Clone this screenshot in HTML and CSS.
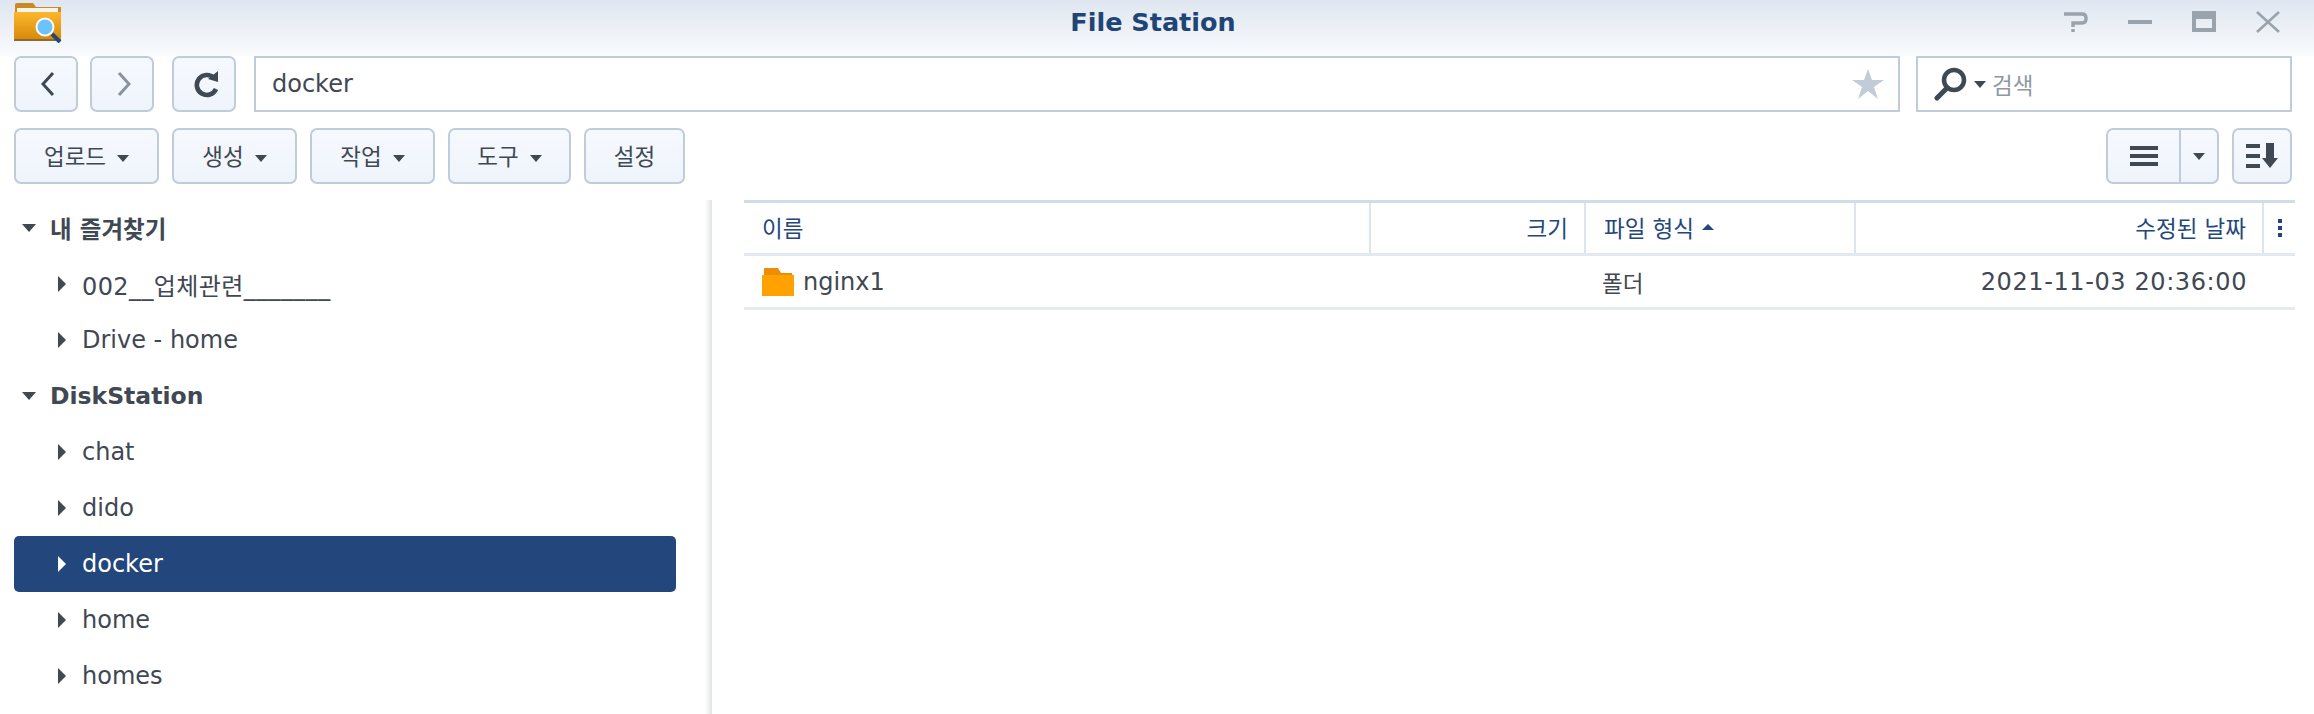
FILE: index.html
```html
<!DOCTYPE html>
<html lang="ko">
<head>
    <meta charset="UTF-8">
    <title>File Station</title>
    <link rel="stylesheet" href="styles.css">
</head>
<body>

    <div class="window">
        <div class="titlebar">
            <svg class="app-icon" width="48" height="40" viewBox="0 0 48 40">
                <defs>
                    <linearGradient id="folderFill" x1="0" y1="0" x2="0" y2="1">
                        <stop offset="0" stop-color="#fdb72c"/>
                        <stop offset="1" stop-color="#d88a0c"/>
                    </linearGradient>
                </defs>
                <path d="M1 2 Q1 0 3 0 H19 L22 4 H47 V10 H1 Z" fill="#c98a1e"/>
                <rect x="3" y="5" width="41" height="4" fill="#f4f4f0"/>
                <rect x="0" y="9" width="47" height="27" fill="url(#folderFill)"/>
                <rect x="0" y="36" width="47" height="2" fill="#8a6a30"/>
                <path d="M38 31 L46 39" stroke="#1d4a78" stroke-width="4"/>
                <circle cx="31" cy="24" r="8.5" fill="#6cc2fb" stroke="#fdfbf2" stroke-width="2"/>
            </svg>
            <div class="title">File Station</div>
            <div class="win-btns">
                <svg width="24" height="22" viewBox="0 0 24 22"><path d="M0 3 H18 Q22 3 22 7 V8 Q22 12 18 12 H9 V16 M9 18 V21" fill="none" stroke="#9aa2ab" stroke-width="3.4"/></svg>
                <svg width="24" height="22" viewBox="0 0 24 22"><rect x="0" y="9" width="24" height="4" fill="#9aa2ab"/></svg>
                <svg width="24" height="22" viewBox="0 0 24 22"><path d="M0 0 H24 V21 H0 Z M4 8 V17 H20 V8 Z" fill="#9aa2ab" fill-rule="evenodd"/></svg>
                <svg width="24" height="22" viewBox="0 0 24 22"><path d="M1 1 L23 21 M23 1 L1 21" stroke="#9aa2ab" stroke-width="2.6"/></svg>
            </div>
        </div>

        <div class="toolbar nav-row">
            <button class="btn icon-btn chevron"><svg width="14" height="26" viewBox="0 0 14 26"><path d="M12 2 L2 13 L12 24" fill="none" stroke="#3f4853" stroke-width="3"/></svg></button>
            <button class="btn icon-btn chevron"><svg width="14" height="26" viewBox="0 0 14 26"><path d="M2 2 L12 13 L2 24" fill="none" stroke="#8a929b" stroke-width="3"/></svg></button>
            <button class="btn icon-btn refresh"><svg width="26" height="28" viewBox="0 0 26 28"><path d="M20 8 A10 10 0 1 0 22 19" fill="none" stroke="#3f4853" stroke-width="4.6"/><path d="M14 9 L24 1 V12 Z" fill="#3f4853"/></svg></button>
            <div class="path-box">
                <span>docker</span>
                <svg width="32" height="30" viewBox="0 0 32 30"><path d="M16 0 L20 11 H32 L22 18 L26 30 L16 22 L6 30 L10 18 L0 11 H12 Z" fill="#c2ccd8"/></svg>
            </div>
            <div class="search-box">
                <svg width="34" height="34" viewBox="0 0 34 34"><circle cx="20" cy="13" r="10" fill="none" stroke="#3f4853" stroke-width="4.5"/><path d="M13 21 L3 31" stroke="#3f4853" stroke-width="5" stroke-linecap="round"/></svg>
                <i class="caret"></i>
                <span>검색</span>
            </div>
        </div>

        <div class="toolbar action-row">
            <button class="btn menu-btn w-upload">업로드 <i class="caret"></i></button>
            <button class="btn menu-btn w-menu">생성 <i class="caret"></i></button>
            <button class="btn menu-btn w-menu">작업 <i class="caret"></i></button>
            <button class="btn menu-btn w-tool">도구 <i class="caret"></i></button>
            <button class="btn menu-btn w-set">설정</button>
            <div class="spacer"></div>
            <div class="btn split-btn">
                <div class="split-main">
                    <svg width="28" height="20" viewBox="0 0 28 20"><path d="M0 0 H28 V4 H0 Z M0 8 H28 V12 H0 Z M0 16 H28 V20 H0 Z" fill="#3f4853"/></svg>
                </div>
                <div class="split-arrow"><i class="caret"></i></div>
            </div>
            <button class="btn sort-btn"><svg width="32" height="26" viewBox="0 0 32 26"><path d="M0 1 H14 V5 H0 Z M0 11 H14 V15 H0 Z M0 21 H14 V25 H0 Z M20 0 H28 V15 H32 L24 25 L16 15 H20 Z" fill="#3f4853"/></svg></button>
        </div>

        <div class="main">
            <div class="sidebar">
                <div class="tree-row head"><i class="tri-down"></i>내 즐겨찾기</div>
                <div class="tree-row long"><i class="tri-right"></i>002__업체관련_______</div>
                <div class="tree-row"><i class="tri-right"></i>Drive - home</div>
                <div class="tree-row head"><i class="tri-down"></i>DiskStation</div>
                <div class="tree-row"><i class="tri-right"></i>chat</div>
                <div class="tree-row"><i class="tri-right"></i>dido</div>
                <div class="tree-row selected"><i class="tri-right"></i>docker</div>
                <div class="tree-row"><i class="tri-right"></i>home</div>
                <div class="tree-row"><i class="tri-right"></i>homes</div>
            </div>
            <div class="splitter"></div>
            <div class="files">
                <div class="grid-head">
                    <div class="col">이름</div>
                    <div class="col right">크기</div>
                    <div class="col">파일 형식 <i class="sort-up"></i></div>
                    <div class="col right">수정된 날짜</div>
                    <div class="col dots"><b></b><b></b><b></b></div>
                </div>
                <div class="grid-row">
                    <div class="cell name-cell">
                        <svg width="32" height="28" viewBox="0 0 32 28"><path d="M2 0 H16 L19 5 H30 V7 H2 Z" fill="#f08c00"/><rect x="0" y="7" width="32" height="21" fill="#ffa200"/></svg>
                        nginx1
                    </div>
                    <div class="cell"></div>
                    <div class="cell kr">폴더</div>
                    <div class="cell right date">2021-11-03 20:36:00</div>
                    <div class="cell"></div>
                </div>
            </div>
        </div>
    </div>

</body>
</html>
```

FILE: styles.css
```css
* {
    box-sizing: border-box;
}
html, body {
    margin: 0;
    height: 100%;
    overflow: hidden;
}
body {
    font-family: "DejaVu Sans", "Noto Sans CJK KR", sans-serif;
    font-size: 24px;
    color: #3f4853;
    background-color: #fff;
}
.window {
    width: 2314px;
    height: 714px;
    display: flex;
    flex-direction: column;
}
.titlebar {
    height: 56px;
    display: grid;
    grid-template-columns: 1fr auto 1fr;
    align-items: center;
    padding: 0 34px 0 14px;
    background: linear-gradient(#dfe6ef 0%, #f9fbfd 100%);
}
.app-icon {
    align-self: start;
    margin-top: 3px;
}
.title {
    font-size: 25.5px;
    font-weight: 700;
    color: #1f4577;
    margin-top: -12px;
    transform: translateX(6px);
}
.win-btns {
    display: flex;
    justify-content: flex-end;
    gap: 40px;
    margin-top: -12px;
}
.toolbar {
    display: flex;
    align-items: center;
    padding: 0 22px 0 14px;
}
.nav-row {
    height: 56px;
    gap: 12px;
}
.action-row {
    height: 56px;
    margin-top: 16px;
    gap: 13px;
}
.spacer {
    flex: 1;
}
.btn {
    height: 100%;
    border: 2px solid #c0ccd9;
    border-radius: 7px;
    background: linear-gradient(#f6f9fe, #eff4fc);
    color: #3f4853;
    font-family: inherit;
    font-size: 22.5px;
    padding: 0;
    display: flex;
    align-items: center;
    justify-content: center;
}
.icon-btn {
    width: 64px;
}
.chevron svg {
    margin-left: 4px;
}
.refresh {
    margin-left: 6px;
}
.refresh svg {
    margin-left: 6px;
}
.path-box {
    width: 1646px;
    height: 100%;
    margin-left: 6px;
    border: 2px solid #c0ccd9;
    display: flex;
    align-items: center;
    justify-content: space-between;
    padding: 0 14px 0 16px;
    background-color: #fff;
}
.search-box {
    width: 376px;
    height: 100%;
    margin-left: 4px;
    border: 2px solid #c0ccd9;
    display: flex;
    align-items: center;
    padding-left: 16px;
    gap: 6px;
    color: #8f98a2;
    font-size: 22.5px;
    background-color: #fff;
}
.caret {
    display: inline-block;
    width: 0;
    height: 0;
    border-style: solid;
    border-width: 7px 6px 0 6px;
    border-color: #3f4853 transparent transparent transparent;
}
.menu-btn {
    padding-bottom: 2px;
}
.menu-btn .caret {
    margin-left: 11px;
    margin-top: 6px;
}
.w-upload { width: 145px; }
.w-menu { width: 125px; }
.w-tool { width: 123px; }
.w-set { width: 101px; }
.split-btn {
    width: 113px;
    justify-content: flex-start;
}
.split-main {
    width: 73px;
    height: 100%;
    display: flex;
    align-items: center;
    justify-content: center;
    border-right: 2px solid #c0ccd9;
}
.split-arrow {
    flex: 1;
    display: flex;
    align-items: center;
    justify-content: center;
}
.sort-btn {
    width: 60px;
}
.main {
    flex: 1;
    display: flex;
    margin-top: 16px;
    min-height: 0;
}
.sidebar {
    width: 705px;
    padding-left: 14px;
    padding-right: 29px;
}
.tree-row {
    height: 56px;
    display: flex;
    align-items: center;
    padding-left: 44px;
    border-radius: 5px;
}
.tree-row.long {
    letter-spacing: 0.4px;
}
.tree-row.head {
    padding-left: 8px;
    font-weight: 700;
    font-size: 23.5px;
}
.tree-row.selected {
    background-color: #23477c;
    color: #fff;
}
.tri-down {
    width: 0;
    height: 0;
    margin-right: 14px;
    border-style: solid;
    border-width: 8px 7.5px 0 7.5px;
    border-color: #3f4853 transparent transparent transparent;
}
.tri-right {
    width: 0;
    height: 0;
    margin-right: 16px;
    border-style: solid;
    border-width: 8px 0 8px 8px;
    border-color: transparent transparent transparent #3f4853;
}
.selected .tri-right {
    border-left-color: #fff;
}
.splitter {
    width: 7px;
    background: linear-gradient(90deg, #fff, #dfe2e6);
}
.files {
    width: 1551px;
    margin-left: 32px;
}
.grid-head, .grid-row {
    display: grid;
    grid-template-columns: 627px 215px 270px 408px 31px;
}
.grid-head {
    height: 56px;
    border-top: 3px solid #d0dce8;
    border-bottom: 3px solid #e3e9f0;
    color: #23477c;
    font-size: 22.5px;
}
.col {
    display: flex;
    align-items: center;
    padding: 0 16px 3px 18px;
    border-right: 2px solid #dbe5f0;
}
.col:last-child {
    border-right: none;
}
.right {
    justify-content: flex-end;
}
.sort-up {
    width: 0;
    height: 0;
    margin-left: 8px;
    border-style: solid;
    border-width: 0 6px 6px 6px;
    border-color: transparent transparent #23477c transparent;
}
.dots {
    flex-direction: column;
    justify-content: center;
    gap: 3px;
    padding: 0;
}
.dots b {
    width: 4px;
    height: 4px;
    background-color: #23477c;
}
.grid-row {
    height: 54px;
    border-bottom: 3px solid #e6ebf0;
}
.cell {
    display: flex;
    align-items: center;
    padding: 0 18px;
}
.name-cell {
    gap: 9px;
}
.kr {
    padding-left: 16px;
    font-size: 22.5px;
}
.date {
    padding-right: 17px;
    letter-spacing: 0.6px;
}
```
